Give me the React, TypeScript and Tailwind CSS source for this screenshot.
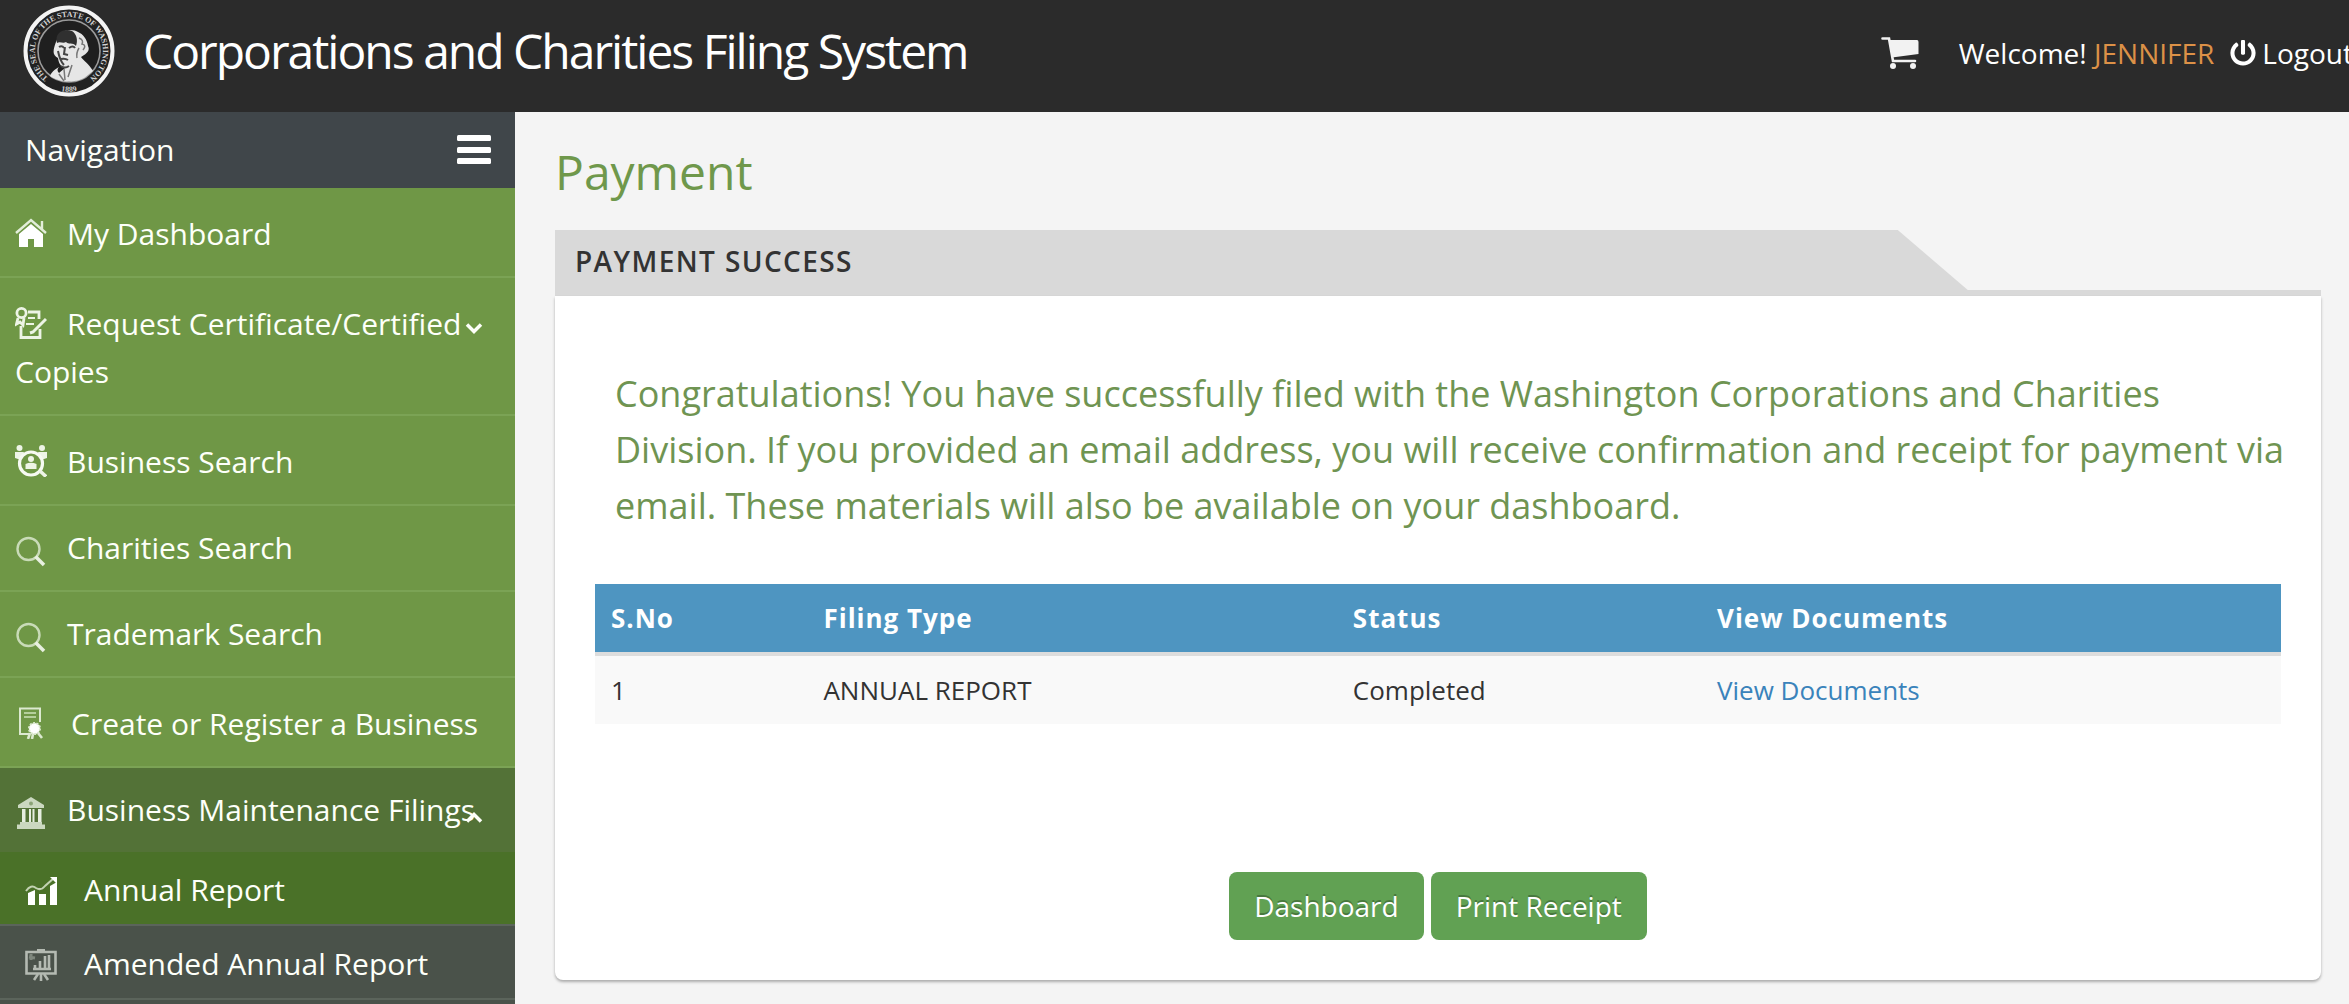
import React, { useState } from 'react';
import { ChevronDown, ChevronUp } from 'lucide-react';
import { FaPowerOff } from 'react-icons/fa';

const Seal = () => (
  <svg viewBox="0 0 92 92" className="h-[92px] w-[92px] shrink-0" role="img" aria-label="State seal">
    <defs>
      <path id="ring-top" d="M31.6 76.8 A34 34 0 1 1 60.4 76.8" />
      <path id="ring-bottom" d="M34 85.2 A41 41 0 0 0 58 85.2" />
    </defs>
    <circle cx="46" cy="46" r="43.5" fill="#222" stroke="#f4f4f4" strokeWidth="4" />
    <circle cx="46" cy="46" r="31" fill="#1f1f1f" stroke="#9a9a9a" strokeWidth="1.6" />
    <g fill="#d2d2d2" className="font-['Liberation_Serif',serif] text-[8px] font-bold">
      <text>
        <textPath href="#ring-top" startOffset="50%" textAnchor="middle">THE SEAL OF THE STATE OF WASHINGTON</textPath>
      </text>
      <text>
        <textPath href="#ring-bottom" startOffset="50%" textAnchor="middle">1889</textPath>
      </text>
    </g>
    <path d="M33 37 C30 45 29 50 35 53 C36 60 39 62 42 63 L36 68 C34 66 34 64 36 62 C29 66 28 69 27 71 C36 78 56 79 65 70 L70 66 C66 59 60 55 58 52 C65 48 67 45 65 41 C64 34 60 29 55 27 C51 24 40 24 36 30 Z" fill="#e6e6e6" />
    <path d="M34 38 C31 27 42 23 49 26 C54 29 55 36 53 41 C50 37 45 40 43 37 C40 39 37 36 34 38 Z" fill="#303030" />
    <path d="M36 42 q3 -2 5 1 M46 43 q4 -3 6 0 M42 42 l-1 7 l4 1 M38 54 q4 -1 7 1 M38 61 q4 3 8 0 M35 46 q2 10 6 14" fill="none" stroke="#444" strokeWidth="2" />
    <path d="M56 33 q5 2 3 6 q5 1 1 6 M56 43 q-3 5 -2 10 M41 64 l1 11 M49 60 l-4 12 M36 69 l5 7" fill="none" stroke="#777" strokeWidth="1.5" />
  </svg>
);

const HomeIcon = () => (
  <svg viewBox="0 0 32 32" className="h-8 w-8" fill="#fff">
    <path d="M4 17 L16 7 L28 17 V30 H19 V22 H13 V30 H4 Z" />
    <path d="M1 16 L16 3 L31 16 M27 4 V12" fill="none" stroke="#e3eeda" strokeWidth="2.4" />
  </svg>
);

const CertificateIcon = () => (
  <svg viewBox="0 0 32 32" className="h-8 w-8" fill="none" stroke="#edf4e6" strokeWidth="2.8">
    <circle cx="6.5" cy="6" r="4.6" />
    <path d="M3 11 L1.5 17 L5 15 L8 18 L9 11" />
    <path d="M13 5 H24 V12 M6 19 V30.5 H25 V22" />
    <path d="M13 11 H20 M11 17 H19" strokeWidth="2" />
    <path d="M31 12 L18 25 L15 26" strokeWidth="3" />
  </svg>
);

const BusinessSearchIcon = () => (
  <svg viewBox="0 0 32 32" className="h-8 w-8" fill="#edf4e6">
    <circle cx="4.5" cy="3" r="3" />
    <circle cx="27" cy="3" r="3" />
    <path d="M0 7 H9 L6 15 L0 13 Z M32 7 H23 L26 15 L32 13 Z" />
    <circle cx="16" cy="18.5" r="11.5" fill="#6f9746" stroke="#f6faf2" strokeWidth="3.2" />
    <circle cx="16" cy="14" r="3" />
    <path d="M10.5 24 V19 Q16 16.5 21.5 19 V24 Z" />
    <path d="M25 26 L31 31.5" stroke="#edf4e6" strokeWidth="3.5" />
  </svg>
);

const SearchIcon = () => (
  <svg viewBox="0 0 32 32" className="h-8 w-8" fill="none">
    <circle cx="13.5" cy="14" r="11" stroke="#c9dbb8" strokeWidth="2.4" />
    <path d="M20.5 21.5 L29 30" stroke="#e8f0e0" strokeWidth="3.6" />
  </svg>
);

const RegisterIcon = () => (
  <svg viewBox="0 0 32 32" className="h-8 w-8" fill="none" stroke="#dce9d0" strokeWidth="2">
    <path d="M14 27 H5 V1.5 H25 V15" />
    <path d="M9 6 H21 M9 10 H21" stroke="#b5cf9c" strokeWidth="2" />
    <circle cx="19.5" cy="21.5" r="5.5" fill="#fff" strokeDasharray="2 1.4" />
    <path d="M15 26 L13 32 M18 27 L17 32 M23 26 L27 31" strokeWidth="2.6" />
  </svg>
);

const BankIcon = () => (
  <svg viewBox="0 0 32 32" className="h-8 w-8" fill="#cbd8c0">
    <path d="M16 0 L29 8 V11 H3 V8 Z" />
    <path d="M7 12 H10.5 V26 H7 Z M14 12 H16 V26 H14 Z M17.5 12 H19.5 V26 H17.5 Z M23 12 H26.5 V26 H23 Z" fill="#e6eee0" />
    <path d="M5 25 H27 V27.5 H30 V32 H2 V27.5 H5 Z" />
    <circle cx="16" cy="6.5" r="2" fill="#8ba377" />
  </svg>
);

const ChartIcon = () => (
  <svg viewBox="0 0 32 32" className="h-8 w-8" fill="#fff">
    <path d="M3 18 L10 15 V30 H3 Z M14 19 H21 V30 H14 Z M25 11 L32 7 V30 H25 Z" />
    <path d="M1 16 Q6 9 11 13 Q16 16 20 11 L29 3" fill="none" stroke="#c3d3b3" strokeWidth="2" />
    <path d="M25 2 H32 V9 Z" />
  </svg>
);

const BoardIcon = () => (
  <svg viewBox="0 0 32 32" className="h-8 w-8" fill="none" stroke="#b4bab2" strokeWidth="2.6">
    <path d="M1.5 3 H30.5 V24.5 H1.5 Z M12 1 H20" />
    <path d="M4 8 L10 9 M6 5 V11" stroke="#7e877d" strokeWidth="3" />
    <path d="M10 20 V16 M15 20 V12 M20 20 V7 M24 20 V6 M8 20 H26" />
    <path d="M13 25 L9 31 M16 25 V32 M19 25 L23 31" />
  </svg>
);

type NavItem = {
  label: string;
  icon: React.ReactNode;
  row: string;
  iconBox: string;
  chevron?: boolean;
};

const navItems: NavItem[] = [
  { label: 'My Dashboard', icon: <HomeIcon />, row: 'pt-[22px]', iconBox: 'h-10 w-[52px]' },
  { label: 'Request Certificate/Certified Copies', icon: <CertificateIcon />, row: 'pt-[22px]', iconBox: 'h-10 w-[52px]', chevron: true },
  { label: 'Business Search', icon: <BusinessSearchIcon />, row: 'pt-[22px]', iconBox: 'h-10 w-[52px]' },
  { label: 'Charities Search', icon: <SearchIcon />, row: 'pt-[18px]', iconBox: 'h-8 w-[52px]' },
  { label: 'Trademark Search', icon: <SearchIcon />, row: 'pt-[18px]', iconBox: 'h-8 w-[52px]' },
  { label: 'Create or Register a Business', icon: <RegisterIcon />, row: 'pt-[22px]', iconBox: 'h-10 w-14' },
];

const subItems = [
  { label: 'Annual Report', icon: <ChartIcon />, row: 'bg-[#4a7128]' },
  { label: 'Amended Annual Report', icon: <BoardIcon />, row: 'bg-[#4a524a]' },
];

const Header = () => (
  <header className="flex h-28 items-start overflow-hidden whitespace-nowrap bg-[#2b2b2b] pl-[23px] text-white">
    <a href="#" className="mt-[5px]"><Seal /></a>
    <div className="ml-7 mt-4 text-[48px] leading-[70px] tracking-[-2px]">Corporations and Charities Filing System</div>
    <div className="-mr-1 ml-auto flex items-center pt-8 text-[28px] leading-[42px]">
      <a href="#" aria-label="Shopping cart" className="mr-10">
        <svg viewBox="0 0 38 32" className="h-8 w-[38px]" fill="#f2f2f2">
          <path d="M1.5 1.5 H8 L12 24 H34" fill="none" stroke="#f2f2f2" strokeWidth="2.6" strokeLinecap="round" />
          <path d="M8 3 H36 Q37.5 3 37.5 5 V17 L11 20.5 Z" />
          <circle cx="12" cy="29" r="3" />
          <circle cx="32" cy="29" r="3" />
        </svg>
      </a>
      <span>Welcome! <a href="#" className="text-[#dc9147]">JENNIFER</a></span>
      <a href="#" className="ml-4 flex items-center gap-1.5">
        <FaPowerOff className="h-[26px] w-[26px]" />
        Logout
      </a>
    </div>
  </header>
);

const Sidebar = () => {
  const [open, setOpen] = useState(true);

  return (
    <aside className="flex w-[515px] shrink-0 flex-col bg-[#4a524a] text-[30px] leading-[48px] text-[#fdfff9]">
      <div className="flex h-[76px] items-center justify-between bg-[#40464a] pl-[25px] pr-6">
        <span>Navigation</span>
        <button type="button" aria-label="Toggle navigation">
          <svg viewBox="0 0 34 30" className="h-[30px] w-[34px]" fill="#fff">
            <rect width="34" height="6" rx="1.5" />
            <rect y="12" width="34" height="6" rx="1.5" />
            <rect y="23" width="34" height="6" rx="1.5" />
          </svg>
        </button>
      </div>
      <nav>
        {navItems.map(item => (
          <a
            key={item.label}
            href="#"
            className={`relative block border-b-2 border-[#7ba355] bg-[#6f9746] pb-[18px] pl-[15px] pr-8 ${item.row}`}
          >
            <span className={`inline-block align-middle ${item.iconBox}`}>{item.icon}</span>
            {item.label}
            {item.chevron && <ChevronDown className="absolute right-[27px] top-9 h-7 w-7" strokeWidth={3} strokeLinecap="butt" strokeLinejoin="miter" />}
          </a>
        ))}
        <button
          type="button"
          onClick={() => setOpen(!open)}
          className="relative block w-full bg-[#537237] py-[18px] pl-[15px] text-left"
        >
          <span className="inline-block h-8 w-[52px] align-middle"><BankIcon /></span>
          Business Maintenance Filings
          <ChevronUp className="absolute right-[27px] top-9 h-7 w-7" strokeWidth={3} strokeLinecap="butt" strokeLinejoin="miter" />
        </button>
        {open && subItems.map(item => (
          <a key={item.label} href="#" className={`block border-b-2 border-[#5b645b] pb-[10px] pl-[25px] pt-[14px] ${item.row}`}>
            <span className="inline-block h-9 w-[59px] align-middle">{item.icon}</span>
            {item.label}
          </a>
        ))}
      </nav>
    </aside>
  );
};

const PaymentCard = () => (
  <section>
    <div className="border-b-[6px] border-[#d9d9d9]">
      <h2 className="h-[60px] w-[80%] bg-[#d9d9d9] pl-5 text-[28px] font-semibold leading-[62px] tracking-wider text-[#333] [clip-path:polygon(0_0,calc(100%-70px)_0,100%_100%,0_100%)]">
        PAYMENT SUCCESS
      </h2>
    </div>
    <div className="rounded-b-lg bg-white px-10 pb-10 pt-[70px] shadow-[0_2px_3px_rgba(0,0,0,0.3)]">
      <p className="-mr-2 pl-5 text-[36px] leading-[56px] text-[#6f9452]">
        Congratulations! You have successfully filed with the Washington Corporations and Charities Division. If you
        provided an email address, you will receive confirmation and receipt for payment via email. These materials will
        also be available on your dashboard.
      </p>
      <table className="mt-[50px] w-full table-fixed border-collapse text-left text-[26px] leading-[36px] text-[#333]">
        <thead>
          <tr className="bg-[#4e95c1] tracking-[1px] text-white">
            <th className="w-[12.6%] p-4 font-bold">S.No</th>
            <th className="w-[31.4%] p-4 font-bold">Filing Type</th>
            <th className="w-[21.6%] p-4 font-bold">Status</th>
            <th className="p-4 font-bold">View Documents</th>
          </tr>
        </thead>
        <tbody>
          <tr className="border-t-4 border-[#ddd] bg-[#f9f9f9]">
            <td className="p-4">1</td>
            <td className="p-4">ANNUAL REPORT</td>
            <td className="p-4">Completed</td>
            <td className="p-4"><a href="#" className="text-[#3a83bb]">View Documents</a></td>
          </tr>
        </tbody>
      </table>
      <div className="mt-[148px] flex justify-center gap-[7px] text-[28px] leading-[68px] text-white">
        <button type="button" className="rounded-lg bg-[#61a153] px-[25px] [text-shadow:0_-2px_0_rgba(0,0,0,0.25)]">Dashboard</button>
        <button type="button" className="rounded-lg bg-[#61a153] px-[25px] [text-shadow:0_-2px_0_rgba(0,0,0,0.25)]">Print Receipt</button>
      </div>
    </div>
  </section>
);

export default function App() {
  return (
    <div className="flex min-h-screen flex-col bg-[#f4f4f4] font-['Open_Sans','Noto_Sans',sans-serif]">
      <Header />
      <div className="flex flex-1">
        <Sidebar />
        <main className="min-w-0 flex-1 pb-6 pl-10 pr-7 pt-[30px]">
          <h1 className="mb-7 text-[48px] leading-[60px] text-[#6f984b]">Payment</h1>
          <PaymentCard />
        </main>
      </div>
    </div>
  );
}
